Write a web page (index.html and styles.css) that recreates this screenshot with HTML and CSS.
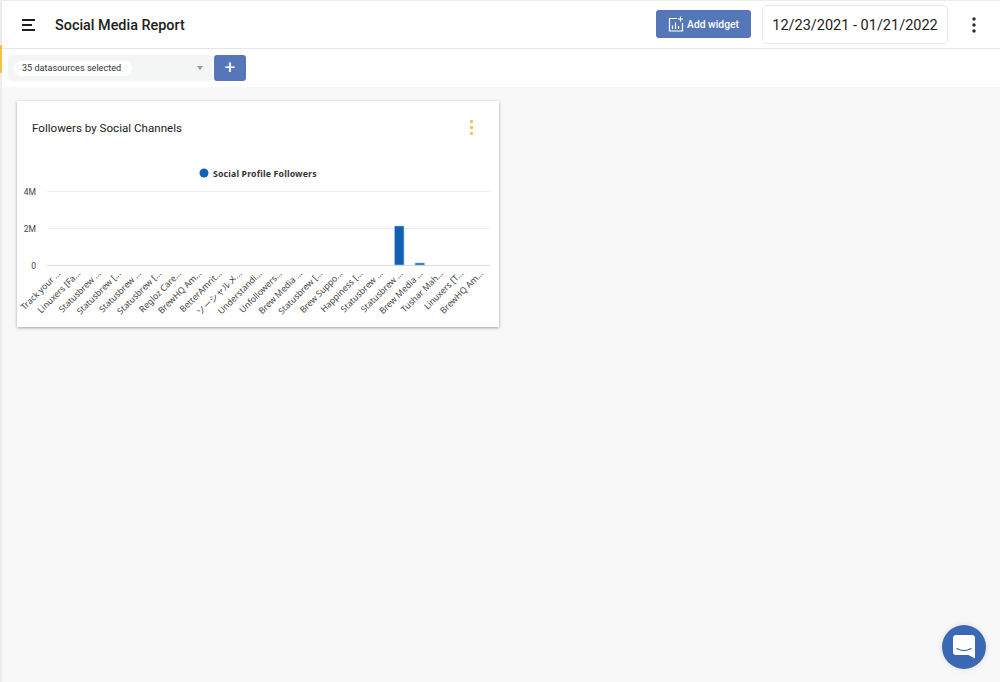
FILE: index.html
```html
<!DOCTYPE html>
<html lang="en">
<head>
<meta charset="utf-8">
<title>Social Media Report</title>
<link rel="stylesheet" href="styles.css">
</head>
<body>
<div class="app">
  <header class="topbar">
    <svg class="menu-icon" viewBox="0 0 14 12" width="14" height="12"><path d="M0 1h13M0 6h10M0 11h13" stroke="#1f1f1f" stroke-width="2" fill="none"/></svg>
    <h1 class="title">Social Media Report</h1>
    <button class="add-widget">
      <svg viewBox="0 0 16 16" width="16" height="16" fill="none" stroke="#fff" stroke-width="1.2"><path d="M9 2.500H1.500V15H14.500V7M12.500 0.500V5.500M10 3H15M4.500 13V9.500M7.500 13V6.500M10.500 13V10"/></svg>
      <span>Add widget</span>
    </button>
    <div class="date-range">12/23/2021 - 01/21/2022</div>
    <svg class="more-icon" viewBox="0 0 4 16" width="4" height="16"><circle cx="2" cy="2" r="1.700"/><circle cx="2" cy="8" r="1.700"/><circle cx="2" cy="14" r="1.700"/></svg>
  </header>
  <div class="filterbar">
    <div class="select">
      <span class="chip">35 datasources selected</span>
      <span class="caret"></span>
    </div>
    <button class="plus">+</button>
  </div>
  <main class="canvas">
    <section class="card">
      <div class="card-head">
        <h2 class="card-title">Followers by Social Channels</h2>
        <svg class="card-more" viewBox="0 0 3 15" width="3" height="15"><rect width="3" height="3" y="0" rx="1"/><rect width="3" height="3" y="6" rx="1"/><rect width="3" height="3" y="12" rx="1"/></svg>
      </div>
      <svg class="chart" viewBox="0 23 482 178" width="482" height="178">
        <circle cx="187" cy="47" r="4.500" fill="#1260b4"/>
        <text class="legend" x="196" y="50.500">Social Profile Followers</text>
        <g class="grid">
          <path d="M30 65.500H473M30 102.500H473"/>
          <path class="axis" d="M30 139.500H473"/>
        </g>
        <g class="ticks">
          <text x="19" y="69">4M</text>
          <text x="19" y="106">2M</text>
          <text x="19" y="142.500">0</text>
        </g>
        <rect class="bar" x="377.500" y="100" width="9.500" height="39"/>
        <rect class="bar" x="398" y="137" width="9.500" height="2"/>
        <g class="labels">
          <text transform="translate(44 148) rotate(-45)">Track your ...</text>
          <text transform="translate(64 148) rotate(-45)">Linuxers [Fa...</text>
          <text transform="translate(84.300 148) rotate(-45)">Statusbrew ...</text>
          <text transform="translate(104.400 148) rotate(-45)">Statusbrew [...</text>
          <text transform="translate(124.600 148) rotate(-45)">Statusbrew ...</text>
          <text transform="translate(144.700 148) rotate(-45)">Statusbrew [...</text>
          <text transform="translate(164.800 148) rotate(-45)">Regloz Care...</text>
          <text transform="translate(185 148) rotate(-45)">BrewHQ Am...</text>
          <text transform="translate(205.100 148) rotate(-45)">BetterAmrit...</text>
          <text transform="translate(225.300 148) rotate(-45)">ソーシャルメ...</text>
          <text transform="translate(245.400 148) rotate(-45)">Understandi...</text>
          <text transform="translate(265.500 148) rotate(-45)">Unfollowers...</text>
          <text transform="translate(285.700 148) rotate(-45)">Brew Media ...</text>
          <text transform="translate(305.800 148) rotate(-45)">Statusbrew [...</text>
          <text transform="translate(326 148) rotate(-45)">Brew Suppo...</text>
          <text transform="translate(346.100 148) rotate(-45)">Happiness [...</text>
          <text transform="translate(366.200 148) rotate(-45)">Statusbrew ...</text>
          <text transform="translate(386.400 148) rotate(-45)">Statusbrew ...</text>
          <text transform="translate(406.500 148) rotate(-45)">Brew Media ...</text>
          <text transform="translate(426.700 148) rotate(-45)">Tushar Mah...</text>
          <text transform="translate(446.800 148) rotate(-45)">Linuxers [T...</text>
          <text transform="translate(466.900 148) rotate(-45)">BrewHQ Am...</text>
        </g>
      </svg>
    </section>
  </main>
  <span class="accent"></span>
  <button class="chat" aria-label="Chat">
    <svg viewBox="0 0 22 24" width="22" height="24"><path d="M3 0H19A3 3 0 0 1 22 3V23.500L15.500 20H3A3 3 0 0 1 0 17V3A3 3 0 0 1 3 0Z" fill="#fff"/><path d="M4 13.500C8 16.200 14 16.200 18 13.500" fill="none" stroke="#3a68b4" stroke-width="1.300" stroke-linecap="round"/></svg>
  </button>
</div>
</body>
</html>
```
FILE: styles.css
```css
* { box-sizing: border-box; }
html, body { margin: 0; height: 100%; }
body { font-family: Roboto, "Noto Sans CJK JP", sans-serif; color: #1f1f1f; background: #fff; overflow: hidden; }
.app { position: relative; height: 682px; border-left: 2px solid #ececec; border-top: 1px solid #ececec; display: flex; flex-direction: column; }
.topbar { height: 48px; flex: none; display: flex; align-items: center; padding: 0 24px 0 20px; border-bottom: 1px solid #e6e6e6; }
.menu-icon { flex: none; margin-top: 1px; }
.title { margin: 0 0 0 19px; padding-top: 1px; font-size: 14.400px; font-weight: 500; color: #212121; flex: 1; }
.add-widget { width: 95px; height: 28px; background: #5577b9; border: 0; border-radius: 3px; color: #fff; display: flex; align-items: center; justify-content: center; gap: 3px; padding: 0; font: 500 10.300px Roboto, sans-serif; margin-bottom: 1px; }
.date-range { width: 186px; height: 39px; margin-left: 11px; padding-top: 1px; border: 1px solid #e8e8e8; border-radius: 5px; display: flex; align-items: center; justify-content: center; font-size: 14.500px; color: #212121; }
.more-icon { margin-left: 24px; fill: #2a2a2a; flex: none; }
.filterbar { height: 38px; flex: none; display: flex; align-items: center; gap: 2px; padding: 0 0 0 6px; }
.select { width: 204px; height: 26px; background: #f4f5f5; border-radius: 4px; display: flex; align-items: center; justify-content: space-between; padding: 0 9px 0 6px; }
.chip { background: #fff; border-radius: 10px; height: 15px; padding: 0 9px 0 8px; font-size: 9.100px; line-height: 14px; width: 118px; white-space: nowrap; color: #333; }
.caret { width: 0; height: 0; border: 3.500px solid transparent; border-top: 4px solid #9a9a9a; border-bottom: 0; }
.plus { width: 32px; height: 26px; background: #5577b9; border: 0; border-radius: 3px; color: #fff; font: 400 19px/26px Roboto, sans-serif; padding: 0; }
.canvas { flex: 1; background: #f8f8f8; padding: 14px 15px; }
.card { width: 481.500px; height: 226px; background: #fff; box-shadow: 0 1px 3px rgba(0,0,0,.35); }
.card-head { height: 48px; display: flex; align-items: center; justify-content: space-between; padding: 5px 26px 0 15px; }
.card-title { margin: 0; font-size: 11.600px; font-weight: 400; color: #212121; }
.card-more { fill: #f6c141; flex: none; }
.chart { display: block; }
.legend { font: 700 8.700px "Noto Sans", "Open Sans", sans-serif; letter-spacing: .18px; fill: #333; }
.grid path { stroke: #eeeeee; fill: none; }
.grid .axis { stroke: #dddddd; }
.ticks text { font: 8.500px Roboto, sans-serif; fill: #444; text-anchor: end; }
.bar { fill: #1260b4; stroke: #b3c9e3; stroke-width: .6; }
.labels text { font: 8.700px "Noto Sans", "Noto Sans CJK JP", sans-serif; fill: #444; text-anchor: end; }
.accent { position: absolute; left: -2px; top: 44px; width: 2px; height: 28px; background: #f6c141; }
.chat { position: absolute; left: 940px; top: 624px; width: 44px; height: 44px; border-radius: 50%; background: #3a68b4; border: 0; padding: 0; display: flex; align-items: center; justify-content: center; box-shadow: 0 0 6px rgba(0,0,0,.12); }
```
